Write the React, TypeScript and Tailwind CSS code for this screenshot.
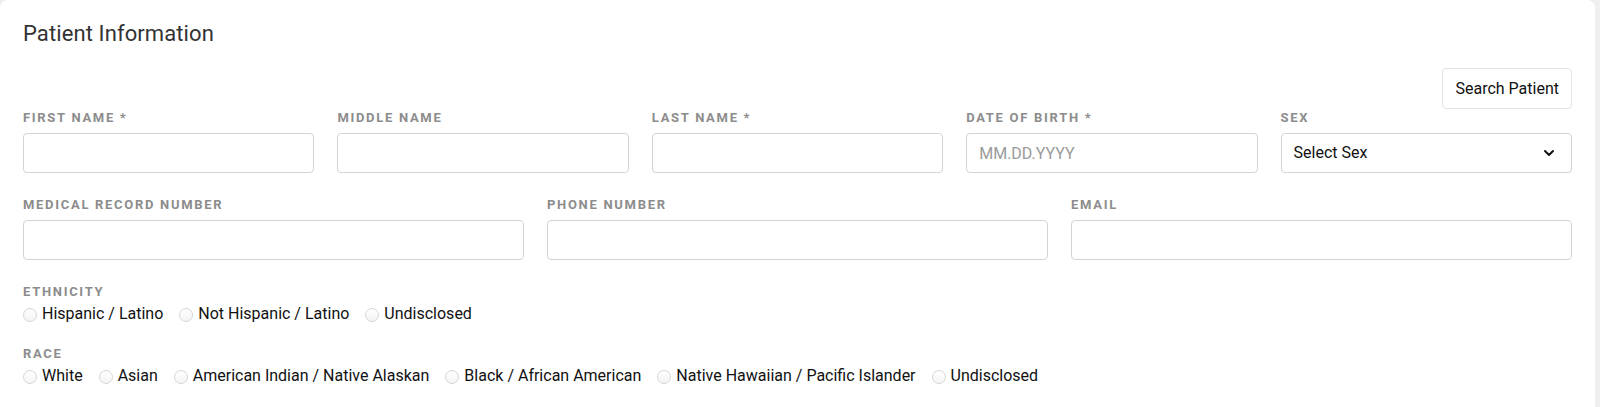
import React from "react";
import { ChevronDown } from "lucide-react";

const ROW_ONE = [
  { label: "First Name *", placeholder: "" },
  { label: "Middle Name", placeholder: "" },
  { label: "Last Name *", placeholder: "" },
  { label: "Date of Birth *", placeholder: "MM.DD.YYYY" },
];

const ROW_TWO = ["Medical Record Number", "Phone Number", "Email"];

const ETHNICITY = ["Hispanic / Latino", "Not Hispanic / Latino", "Undisclosed"];

const RACE = [
  "White",
  "Asian",
  "American Indian / Native Alaskan",
  "Black / African American",
  "Native Hawaiian / Pacific Islander",
  "Undisclosed",
];

function FieldLabel({ children }: { children: React.ReactNode }) {
  return (
    <label className="block text-[13px] leading-4 font-bold uppercase tracking-[1.7px] text-[#8c8c8c]">
      {children}
    </label>
  );
}

function RadioGroup({ name, options }: { name: string; options: string[] }) {
  return (
    <div className="mt-[2px] flex items-center gap-4">
      {options.map((opt) => (
        <label key={opt} className="flex items-center gap-[5px] text-[16px] leading-6 text-[#111]">
          <input
            type="radio"
            name={name}
            className="h-[14px] w-[14px] appearance-none rounded-full border border-[#d6d6d6] bg-gradient-to-b from-white to-[#f4f4f4] translate-y-[1px]"
          />
          {opt}
        </label>
      ))}
    </div>
  );
}

export default function App() {
  return (
    <div className="min-h-screen bg-[#efefef] font-['Roboto','Liberation_Sans',sans-serif]">
      <div className="w-[1595px] min-h-[407px] rounded-lg bg-white px-[23px] pt-5 pb-8">
        <h2 className="text-[22px] leading-7 tracking-[0.1px] text-[#333]">Patient Information</h2>

        <div className="mt-5 flex justify-end">
          <button className="h-[41px] rounded-[4px] border border-[#e2e2e2] bg-white px-3 text-[16px] text-[#111]">
            Search Patient
          </button>
        </div>

        <div className="mt-[1px] grid grid-cols-5 gap-x-[23px]">
          {ROW_ONE.map((f) => (
            <div key={f.label}>
              <FieldLabel>{f.label}</FieldLabel>
              <input
                type="text"
                placeholder={f.placeholder}
                className="mt-[7px] h-10 w-full rounded-[4px] border border-[#d4d4d4] px-3 text-[16px] placeholder:text-[#9a9a9a] outline-none"
              />
            </div>
          ))}
          <div>
            <FieldLabel>Sex</FieldLabel>
            <div className="mt-[7px] flex h-10 w-full items-center justify-between rounded-[4px] border border-[#d4d4d4] pl-3 pr-[14px] text-[16px] text-[#111]">
              <span>Select Sex</span>
              <ChevronDown size={16} strokeWidth={3} className="text-[#111]" />
            </div>
          </div>
        </div>

        <div className="mt-6 grid grid-cols-3 gap-x-[23px]">
          {ROW_TWO.map((label) => (
            <div key={label}>
              <FieldLabel>{label}</FieldLabel>
              <input
                type="text"
                className="mt-[7px] h-10 w-full rounded-[4px] border border-[#d4d4d4] px-3 text-[16px] outline-none"
              />
            </div>
          ))}
        </div>

        <div className="mt-6">
          <FieldLabel>Ethnicity</FieldLabel>
          <RadioGroup name="ethnicity" options={ETHNICITY} />
        </div>

        <div className="mt-[20px]">
          <FieldLabel>Race</FieldLabel>
          <RadioGroup name="race" options={RACE} />
        </div>
      </div>
    </div>
  );
}
